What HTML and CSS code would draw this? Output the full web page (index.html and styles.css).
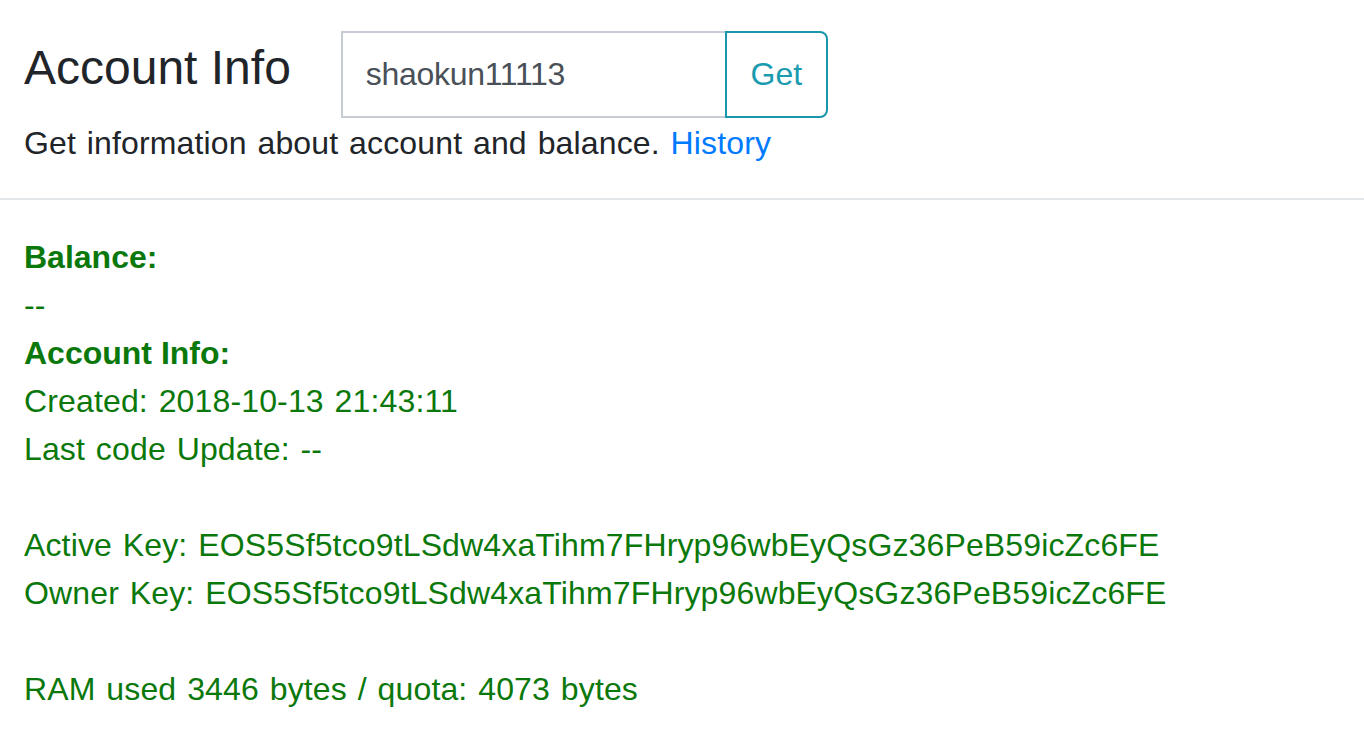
FILE: index.html
```html
<!DOCTYPE html>
<html>
<head>
<meta charset="utf-8">
<link rel="stylesheet" href="styles.css">
</head>
<body>
<div class="header">
  <div class="top-row">
    <h4 class="title">Account Info</h4>
    <div class="input-group">
      <input class="account-input" type="text" value="shaokun11113">
      <button class="get-btn">Get</button>
    </div>
  </div>
  <p class="desc">Get information about account and balance. <a class="history" href="#">History</a></p>
</div>
<hr class="divider">
<div class="info">
  <div class="label">Balance:</div>
  <div class="line">--</div>
  <div class="label">Account Info:</div>
  <div class="line">Created: 2018-10-13 21:43:11</div>
  <div class="line">Last code Update: --</div>
  <div class="blank">&nbsp;</div>
  <div class="line">Active Key: EOS5Sf5tco9tLSdw4xaTihm7FHryp96wbEyQsGz36PeB59icZc6FE</div>
  <div class="line">Owner Key: EOS5Sf5tco9tLSdw4xaTihm7FHryp96wbEyQsGz36PeB59icZc6FE</div>
  <div class="blank">&nbsp;</div>
  <div class="line">RAM used 3446 bytes / quota: 4073 bytes</div>
</div>
</body>
</html>
```
FILE: styles.css
```css
html, body {
  margin: 0;
  padding: 0;
  background: #fff;
}
body {
  font-family: "Liberation Sans", Arial, Helvetica, sans-serif;
  font-size: 32px;
  line-height: 48px;
  color: #212529;
}
.header {
  padding: 31px 24px 0 24px;
}
.top-row {
  display: flex;
  align-items: flex-start;
}
.title {
  margin: 8px 0 0 0;
  font-size: 48px;
  line-height: 57.6px;
  font-weight: 400;
  color: #212529;
}
.input-group {
  display: flex;
  margin-left: 50px;
  height: 87px;
}
.account-input {
  box-sizing: border-box;
  width: 384px;
  height: 87px;
  border: 2px solid #c7ccd4;
  border-right: none;
  border-radius: 0;
  padding: 0 0 0 23px;
  font-family: inherit;
  font-size: 32px;
  letter-spacing: -0.3px;
  color: #495057;
  outline: none;
  background: #fff;
}
.get-btn {
  box-sizing: border-box;
  width: 103px;
  height: 87px;
  border: 2px solid #1896ab;
  border-radius: 0 8px 8px 0;
  background: #fff;
  color: #1a9bb0;
  font-family: inherit;
  font-size: 32px;
  padding: 0;
}
.desc {
  margin: 1px 0 0 0;
  line-height: 48px;
  letter-spacing: 0.14px;
  word-spacing: 1.8px;
}
.history {
  color: #007bff;
  text-decoration: none;
}
.divider {
  margin: 31px 0 0 0;
  border: 0;
  border-top: 2px solid #e4e7ea;
  height: 0;
}
.info {
  padding: 33px 24px 0 24px;
  color: #0b780b;
}
.line {
  letter-spacing: 0.14px;
  word-spacing: 1.8px;
}
.label {
  font-weight: 700;
}
```
